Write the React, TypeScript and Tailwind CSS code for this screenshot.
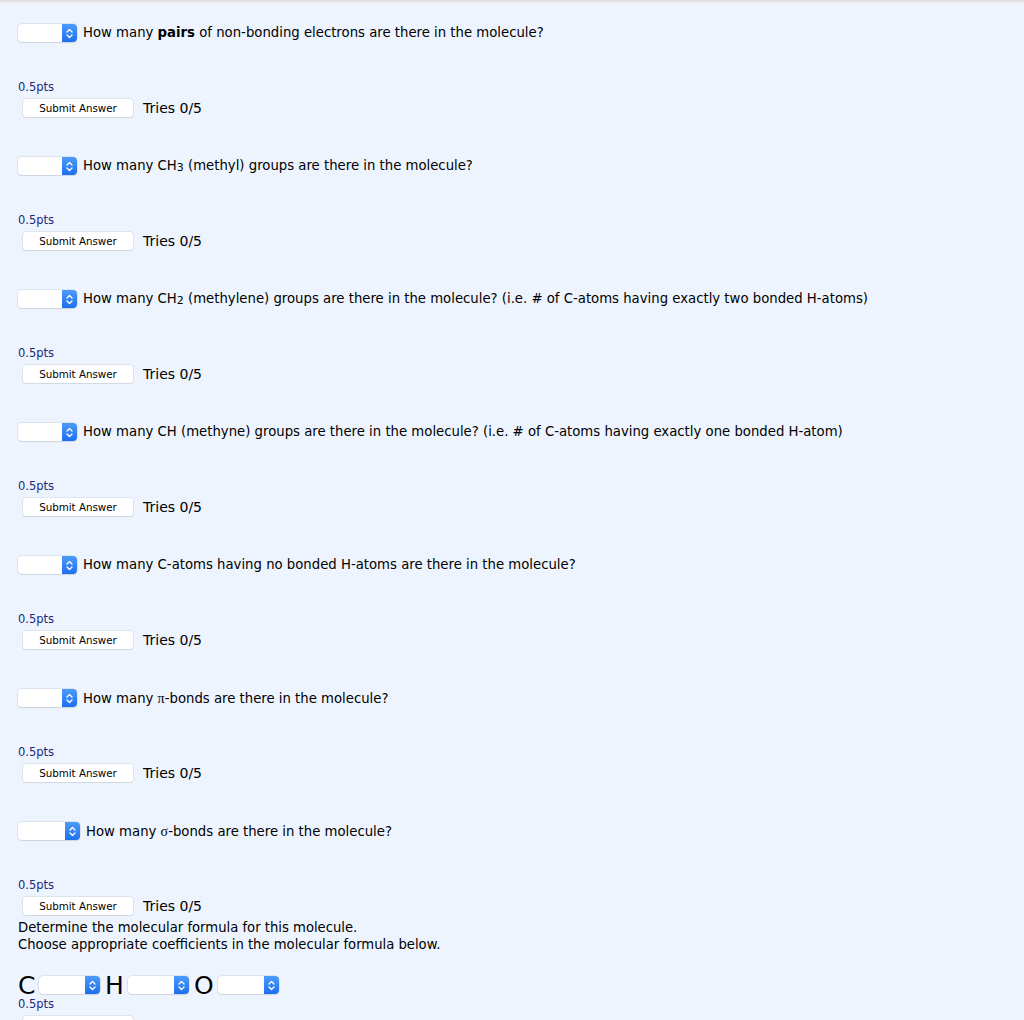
import React from 'react'

const font = { fontFamily: '"DejaVu Sans", Verdana, sans-serif' }

const Select = ({ w = 'w-[59px]' }: { w?: string }) => (
  <div
    className={`${w} h-[18px] flex rounded-[4px] bg-white shadow-[0_0_0_0.5px_#c9d2de,0_1px_1px_rgba(0,0,0,0.12)] overflow-hidden shrink-0`}
  >
    <div className="flex-1" />
    <div className="w-[15px] h-full bg-gradient-to-b from-[#4c9bf8] to-[#1d6ff0] flex items-center justify-center">
      <svg width="7" height="11" viewBox="0 0 7 11" fill="none">
        <path d="M1 4 L3.5 1.5 L6 4" stroke="white" strokeWidth="1.3" strokeLinecap="round" strokeLinejoin="round" />
        <path d="M1 7 L3.5 9.5 L6 7" stroke="white" strokeWidth="1.3" strokeLinecap="round" strokeLinejoin="round" />
      </svg>
    </div>
  </div>
)

const Pts = () => <div className="text-[11.5px] leading-[14px] text-[#1b2a80]">0.5pts</div>

const SubmitRow = () => (
  <div className="flex items-center h-[18px] ml-[5px]">
    <button className="w-[110px] h-[18px] bg-white rounded-[3px] shadow-[0_0_0_0.5px_#cdd3db,0_1px_1px_rgba(0,0,0,0.1)] text-[10.3px] text-black leading-none">
      Submit Answer
    </button>
    <span className="ml-[10px] text-[14px] text-black">Tries 0/5</span>
  </div>
)

const Greek = ({ c }: { c: string }) => (
  <span style={{ fontFamily: '"Liberation Serif", serif' }} className="text-[14px]">
    {c}
  </span>
)

const questions: { q: React.ReactNode; wide?: boolean }[] = [
  {
    q: (
      <>
        How many <b>pairs</b> of non-bonding electrons are there in the molecule?
      </>
    ),
  },
  {
    q: (
      <>
        How many CH<sub className="text-[11px] relative top-[1px]">3</sub> (methyl) groups are there in the molecule?
      </>
    ),
  },
  {
    q: (
      <>
        How many CH<sub className="text-[11px] relative top-[1px]">2</sub> (methylene) groups are there in the molecule? (i.e. # of C-atoms having exactly two bonded H-atoms)
      </>
    ),
  },
  {
    q: <>How many CH (methyne) groups are there in the molecule? (i.e. # of C-atoms having exactly one bonded H-atom)</>,
  },
  { q: <>How many C-atoms having no bonded H-atoms are there in the molecule?</> },
  {
    q: (
      <>
        How many <Greek c="π" />-bonds are there in the molecule?
      </>
    ),
  },
  {
    q: (
      <>
        How many <Greek c="σ" />-bonds are there in the molecule?
      </>
    ),
    wide: true,
  },
]

export default function App() {
  return (
    <div style={font} className="w-[1024px] h-[1020px] overflow-hidden bg-[#edf4fe] text-black">
      <div className="h-[3px] bg-gradient-to-b from-[#dcdcdc] to-[#ececec]" />
      <div className="pl-[18px] pt-[21px]">
        {questions.map((item, i) => (
          <div key={i} className={i === 0 ? '' : 'mt-[40px]'}>
            <div className="flex items-center h-[18px]">
              <Select w={item.wide ? 'w-[62px]' : 'w-[59px]'} />
              <span className="ml-[6px] text-[13.25px] whitespace-nowrap">{item.q}</span>
            </div>
            <div className="mt-[38px]">
              <Pts />
            </div>
            <div className="mt-[5px]">
              <SubmitRow />
            </div>
          </div>
        ))}
        <div className="text-[13.2px] leading-[17px] mt-[4px]">
          <div>Determine the molecular formula for this molecule.</div>
          <div>Choose appropriate coefficients in the molecular formula below.</div>
        </div>
        <div className="flex items-center h-[30px] mt-[17px] text-[25px] leading-none">
          <span className="w-[21px]">C</span>
          <Select w="w-[61px]" />
          <span className="ml-[5px] w-[23px]">H</span>
          <Select w="w-[61px]" />
          <span className="ml-[5px] w-[24px]">O</span>
          <Select w="w-[61px]" />
        </div>
        <div className="mt-[-3px]">
          <Pts />
        </div>
        <div className="mt-[5px] ml-[5px] w-[110px] h-[18px] bg-white rounded-[3px] shadow-[0_0_0_0.5px_#cdd3db]" />
      </div>
    </div>
  )
}
